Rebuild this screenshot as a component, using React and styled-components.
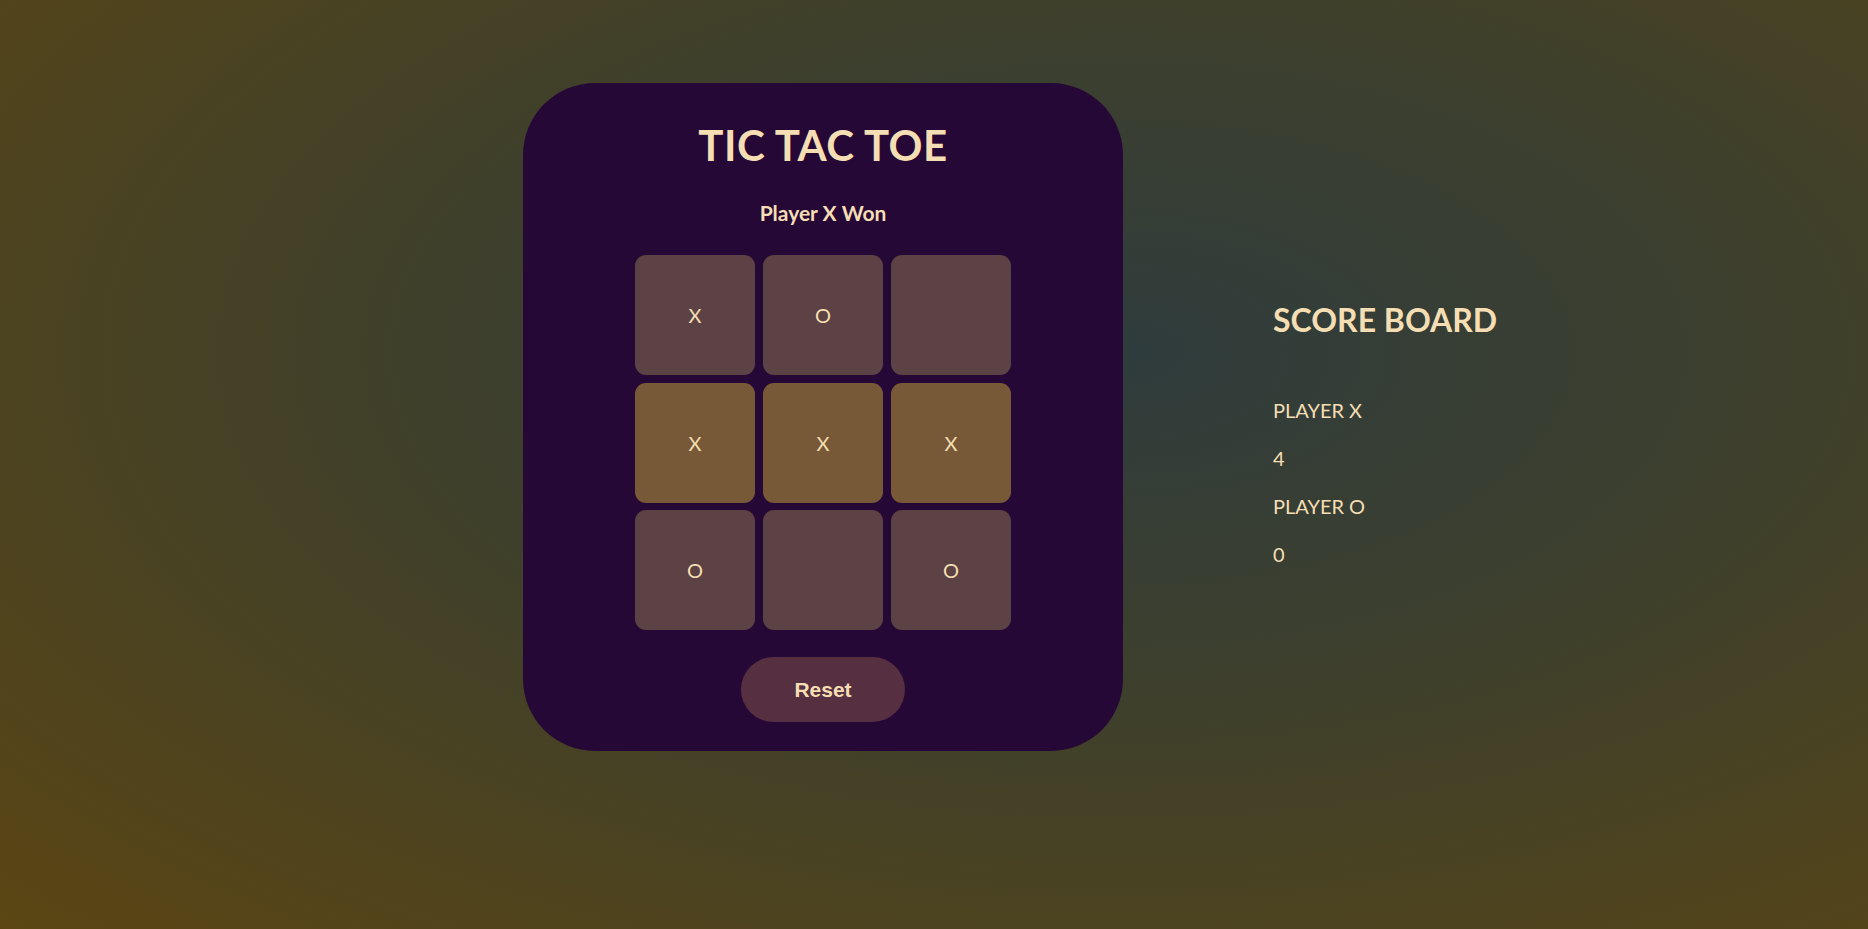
import React, { useState } from 'react';
import styled, { createGlobalStyle } from 'styled-components';

const GlobalStyle = createGlobalStyle`
  html, body {
    margin: 0;
    padding: 0;
    height: 100%;
  }
  body {
    font-family: Futura, 'Lato', 'DejaVu Sans', sans-serif;
    color: #f5deb3;
  }
`;

const Page = styled.main`
  min-height: 929px;
  box-sizing: border-box;
  background: radial-gradient(ellipse farthest-corner at 60% 38%, #2f3c3d 0%, #3f402b 45%, #5b4613 100%);
  display: flex;
  align-items: flex-start;
  padding: 83px 0 0 523px;
  gap: 150px;
`;

const Card = styled.section`
  width: 600px;
  height: 668px;
  box-sizing: border-box;
  background: #260836;
  border-radius: 72px;
  display: flex;
  flex-direction: column;
  align-items: center;
  padding-top: 36px;
`;

const Title = styled.h1`
  margin: 0;
  font-size: 42px;
  line-height: 52px;
  font-weight: 700;
  letter-spacing: 0.5px;
`;

const Status = styled.h3`
  margin: 30px 0 0;
  font-size: 21px;
  line-height: 24px;
  font-weight: 700;
`;

const Board = styled.div`
  margin-top: 30px;
  display: grid;
  grid-template-columns: repeat(3, 120px);
  grid-auto-rows: 120px;
  gap: 7.5px 8px;
`;

const Cell = styled.button`
  border: none;
  border-radius: 11px;
  background: ${(p) => (p.$win ? '#775937' : '#5c4244')};
  color: #f5deb3;
  font-family: Futura, 'Lato', 'DejaVu Sans', sans-serif;
  font-size: 20px;
  display: flex;
  align-items: center;
  justify-content: center;
  padding: 0;
  cursor: pointer;
`;

const ResetButton = styled.button`
  margin-top: 27px;
  width: 164px;
  height: 65px;
  border: none;
  border-radius: 33px;
  background: #562f40;
  color: #f5deb3;
  font-family: 'Liberation Sans', Arial, sans-serif;
  font-weight: 700;
  font-size: 21px;
  cursor: pointer;
`;

const ScoreBoard = styled.aside`
  margin-top: 217px;
  display: flex;
  flex-direction: column;
`;

const ScoreTitle = styled.h2`
  margin: 0 0 58px;
  font-size: 32px;
  line-height: 40px;
  font-weight: 700;
`;

const ScoreLine = styled.p`
  margin: 0 0 24px;
  font-size: 20px;
  line-height: 24px;
`;

const initial = ['X', 'O', '', 'X', 'X', 'X', 'O', '', 'O'];
const winLine = [3, 4, 5];

export default function App() {
  const [cells, setCells] = useState(initial);
  const [score] = useState({ x: 4, o: 0 });

  return (
    <>
      <GlobalStyle />
      <Page>
        <Card>
          <Title>TIC TAC TOE</Title>
          <Status>Player X Won</Status>
          <Board>
            {cells.map((c, i) => (
              <Cell key={i} $win={winLine.includes(i)}>
                {c}
              </Cell>
            ))}
          </Board>
          <ResetButton onClick={() => setCells(Array(9).fill(''))}>Reset</ResetButton>
        </Card>
        <ScoreBoard>
          <ScoreTitle>SCORE BOARD</ScoreTitle>
          <ScoreLine>PLAYER X</ScoreLine>
          <ScoreLine>{score.x}</ScoreLine>
          <ScoreLine>PLAYER O</ScoreLine>
          <ScoreLine>{score.o}</ScoreLine>
        </ScoreBoard>
      </Page>
    </>
  );
}
